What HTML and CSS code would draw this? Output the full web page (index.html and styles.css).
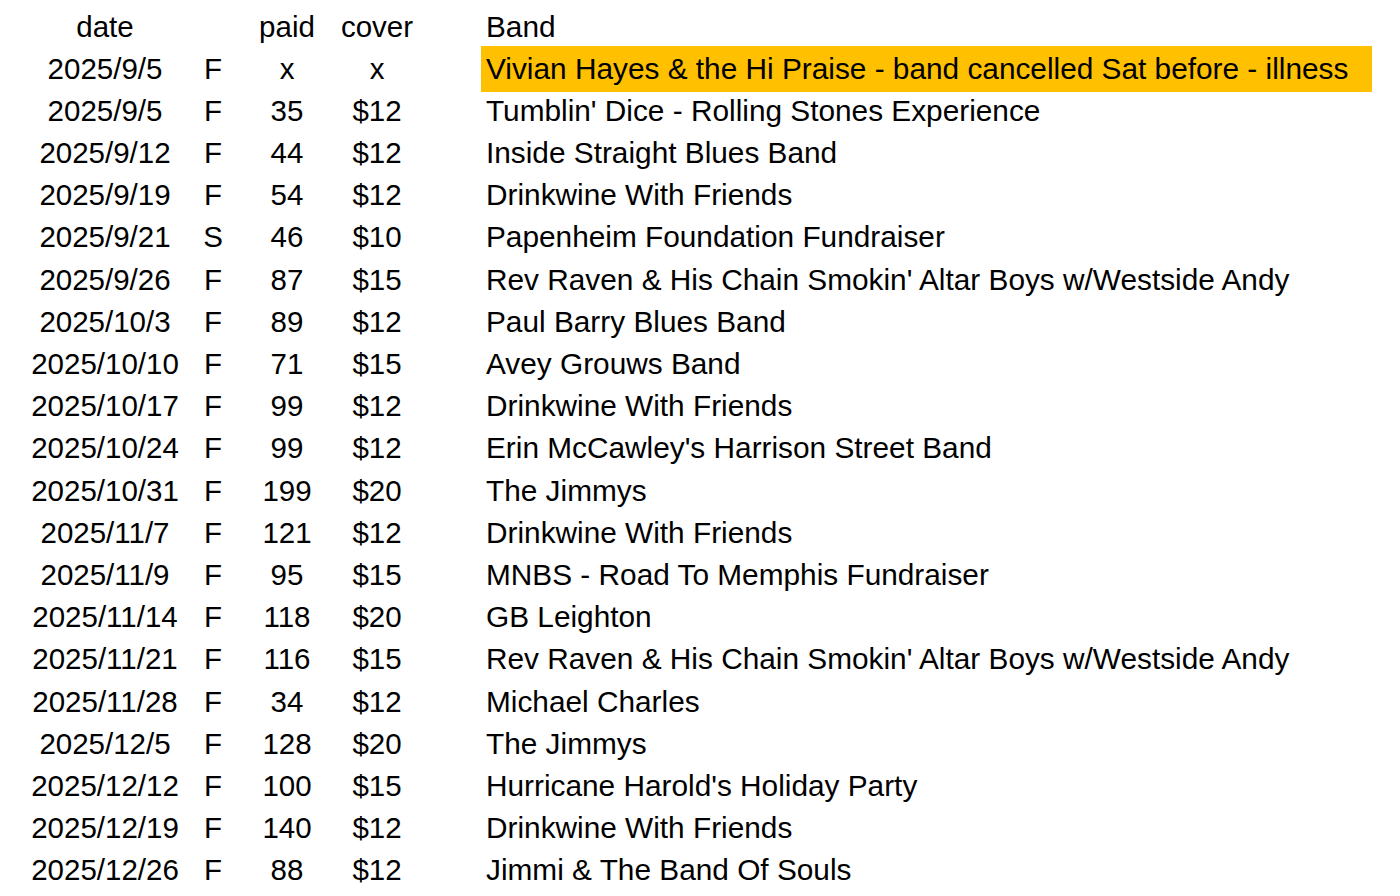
FILE: index.html
```html
<!DOCTYPE html>
<html>
<head>
<meta charset="utf-8">
<link rel="stylesheet" href="styles.css">
</head>
<body>
<div class="sheet">
  <div class="row"><span class="c date">date</span><span class="c day"></span><span class="c paid">paid</span><span class="c cover">cover</span><span class="c gap"></span><span class="c band">Band</span></div>
  <div class="row"><span class="c date">2025/9/5</span><span class="c day">F</span><span class="c paid">x</span><span class="c cover">x</span><span class="c gap"></span><span class="c band hl">Vivian Hayes &amp; the Hi Praise - band cancelled Sat before - illness</span></div>
  <div class="row"><span class="c date">2025/9/5</span><span class="c day">F</span><span class="c paid">35</span><span class="c cover">$12</span><span class="c gap"></span><span class="c band">Tumblin' Dice - Rolling Stones Experience</span></div>
  <div class="row"><span class="c date">2025/9/12</span><span class="c day">F</span><span class="c paid">44</span><span class="c cover">$12</span><span class="c gap"></span><span class="c band">Inside Straight Blues Band</span></div>
  <div class="row"><span class="c date">2025/9/19</span><span class="c day">F</span><span class="c paid">54</span><span class="c cover">$12</span><span class="c gap"></span><span class="c band">Drinkwine With Friends</span></div>
  <div class="row"><span class="c date">2025/9/21</span><span class="c day">S</span><span class="c paid">46</span><span class="c cover">$10</span><span class="c gap"></span><span class="c band">Papenheim Foundation Fundraiser</span></div>
  <div class="row"><span class="c date">2025/9/26</span><span class="c day">F</span><span class="c paid">87</span><span class="c cover">$15</span><span class="c gap"></span><span class="c band">Rev Raven &amp; His Chain Smokin' Altar Boys w/Westside Andy</span></div>
  <div class="row"><span class="c date">2025/10/3</span><span class="c day">F</span><span class="c paid">89</span><span class="c cover">$12</span><span class="c gap"></span><span class="c band">Paul Barry Blues Band</span></div>
  <div class="row"><span class="c date">2025/10/10</span><span class="c day">F</span><span class="c paid">71</span><span class="c cover">$15</span><span class="c gap"></span><span class="c band">Avey Grouws Band</span></div>
  <div class="row"><span class="c date">2025/10/17</span><span class="c day">F</span><span class="c paid">99</span><span class="c cover">$12</span><span class="c gap"></span><span class="c band">Drinkwine With Friends</span></div>
  <div class="row"><span class="c date">2025/10/24</span><span class="c day">F</span><span class="c paid">99</span><span class="c cover">$12</span><span class="c gap"></span><span class="c band">Erin McCawley's Harrison Street Band</span></div>
  <div class="row"><span class="c date">2025/10/31</span><span class="c day">F</span><span class="c paid">199</span><span class="c cover">$20</span><span class="c gap"></span><span class="c band">The Jimmys</span></div>
  <div class="row"><span class="c date">2025/11/7</span><span class="c day">F</span><span class="c paid">121</span><span class="c cover">$12</span><span class="c gap"></span><span class="c band">Drinkwine With Friends</span></div>
  <div class="row"><span class="c date">2025/11/9</span><span class="c day">F</span><span class="c paid">95</span><span class="c cover">$15</span><span class="c gap"></span><span class="c band">MNBS - Road To Memphis Fundraiser</span></div>
  <div class="row"><span class="c date">2025/11/14</span><span class="c day">F</span><span class="c paid">118</span><span class="c cover">$20</span><span class="c gap"></span><span class="c band">GB Leighton</span></div>
  <div class="row"><span class="c date">2025/11/21</span><span class="c day">F</span><span class="c paid">116</span><span class="c cover">$15</span><span class="c gap"></span><span class="c band">Rev Raven &amp; His Chain Smokin' Altar Boys w/Westside Andy</span></div>
  <div class="row"><span class="c date">2025/11/28</span><span class="c day">F</span><span class="c paid">34</span><span class="c cover">$12</span><span class="c gap"></span><span class="c band">Michael Charles</span></div>
  <div class="row"><span class="c date">2025/12/5</span><span class="c day">F</span><span class="c paid">128</span><span class="c cover">$20</span><span class="c gap"></span><span class="c band">The Jimmys</span></div>
  <div class="row"><span class="c date">2025/12/12</span><span class="c day">F</span><span class="c paid">100</span><span class="c cover">$15</span><span class="c gap"></span><span class="c band">Hurricane Harold's Holiday Party</span></div>
  <div class="row"><span class="c date">2025/12/19</span><span class="c day">F</span><span class="c paid">140</span><span class="c cover">$12</span><span class="c gap"></span><span class="c band">Drinkwine With Friends</span></div>
  <div class="row"><span class="c date">2025/12/26</span><span class="c day">F</span><span class="c paid">88</span><span class="c cover">$12</span><span class="c gap"></span><span class="c band">Jimmi &amp; The Band Of Souls</span></div>
</div>
</body>
</html>
```
FILE: styles.css
```css
html, body {
  margin: 0;
  padding: 0;
  background: #ffffff;
}
.sheet {
  padding: 3.5px 0 0 18px;
  font-family: "Liberation Sans", Arial, sans-serif;
  font-size: 29.5px;
  color: #000;
}
.row {
  display: grid;
  grid-template-columns: 174px 42px 106px 74px 67px 891px;
  height: 42.2px;
  line-height: 46px;
  white-space: nowrap;
}
.c {
  text-align: center;
  overflow: visible;
}
.band {
  text-align: left;
  padding-left: 5px;
  font-size: 29.8px;
}
.hl {
  background: #ffc000;
}
```
